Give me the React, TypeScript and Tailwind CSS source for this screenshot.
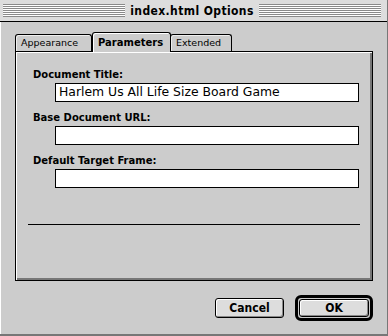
import React from 'react';

const stripes =
  'bg-[repeating-linear-gradient(to_bottom,#8a8a8a_0px,#8a8a8a_1px,#ffffff_1px,#ffffff_2px)]';

function Tab({ label, selected, width }: { label: string; selected?: boolean; width: string }) {
  return (
    <div
      className={`${width} ${
        selected
          ? 'font-bold text-[10px] z-10 -mb-px h-[20px] shadow-[inset_1px_1px_0_#ffffff]'
          : 'h-[17px] text-[9.5px] shadow-[inset_1px_1px_0_#eeeeee]'
      } bg-[#cccccc] border border-black border-b-0 rounded-t-[3px] flex items-center pl-[5px] text-black`}
    >
      {label}
    </div>
  );
}

function Field({ label, value, first }: { label: string; value?: string; first?: boolean }) {
  return (
    <div className={first ? '' : 'mt-[10px]'}>
      <div className="pl-[17px] h-[12px] leading-[12px] text-[10px] font-bold">{label}</div>
      <div className="mt-[2px] ml-[39px] w-[304px] h-[19px] border border-black bg-white flex items-center pl-[3px] text-[12.4px] leading-none">
        {value}
      </div>
    </div>
  );
}

function App() {
  return (
    <div
      className="w-[388px] h-[336px] bg-[#cccccc] flex flex-col border-r border-r-[#777777] border-b-2 border-b-[#777777] text-black"
      style={{ fontFamily: '"DejaVu Sans", Verdana, sans-serif' }}
    >
      {/* title bar */}
      <div className="h-[22px] bg-[#dddddd] border-b border-black flex items-center pl-[3px] pr-[6px] gap-[5px]">
        <div className={`flex-1 h-[13px] ${stripes}`}></div>
        <div
          className="text-[12px] font-bold leading-none tracking-[0.4px]"
          style={{ fontFamily: '"DejaVu Sans Condensed", "DejaVu Sans", sans-serif' }}
        >
          index.html Options
        </div>
        <div className={`flex-1 h-[13px] ${stripes}`}></div>
      </div>

      {/* body */}
      <div className="flex-1 flex flex-col border-l border-l-white pl-[14px] pt-[10px]">
        <div className="flex items-end">
          <Tab label="Appearance" width="w-[77px]" />
          <Tab label="Parameters" width="w-[79px]" selected />
          <Tab label="Extended" width="w-[62px] -ml-px" />
        </div>
        <div className="w-[358px] h-[230px] border border-black bg-[#cccccc] shadow-[inset_1px_1px_0_#ffffff,inset_-2px_-2px_0_#777777] pt-[17px]">
          <Field label="Document Title:" value="Harlem Us All Life Size Board Game" first />
          <Field label="Base Document URL:" />
          <Field label="Default Target Frame:" />
          <div className="mt-[36px] ml-[12px] w-[332px] h-px bg-black"></div>
        </div>

        <div
          className="flex items-center justify-end gap-[11px] pr-[14px] mt-[14px] text-[12px] font-bold"
          style={{ fontFamily: '"DejaVu Sans Condensed", "DejaVu Sans", sans-serif' }}
        >
          <button className="w-[69px] h-[20px] border border-black rounded-[3px] bg-[#dddddd] shadow-[inset_1px_1px_0_#ffffff,inset_-1px_-1px_0_#888888] flex items-center justify-center leading-none">
            Cancel
          </button>
          <div className="w-[78px] h-[26px] border-[3px] border-black rounded-[6px] p-px flex">
            <button className="flex-1 border border-black rounded-[3px] bg-[#dddddd] shadow-[inset_1px_1px_0_#ffffff,inset_-1px_-1px_0_#888888] flex items-center justify-center leading-none">
              OK
            </button>
          </div>
        </div>
      </div>
    </div>
  );
}

export default App;
